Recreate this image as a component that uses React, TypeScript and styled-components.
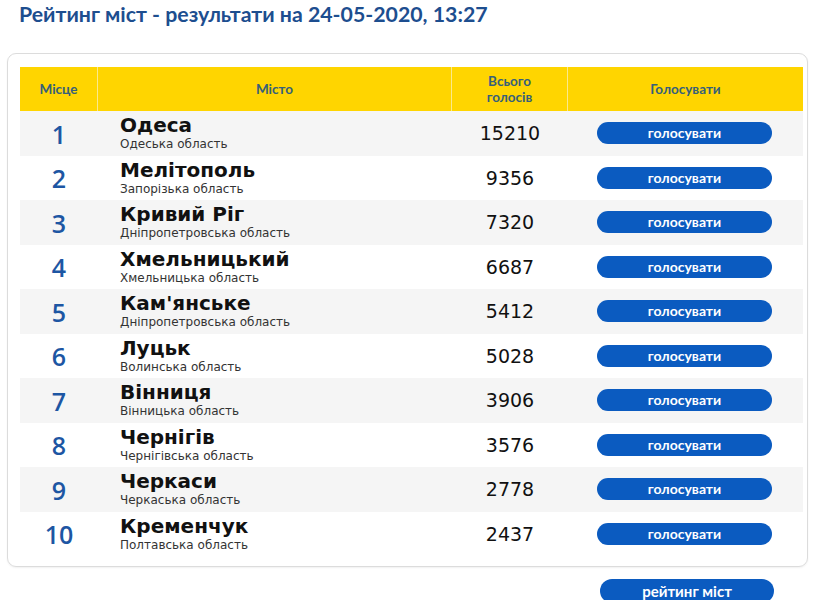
import React from "react";
import styled, { createGlobalStyle } from "styled-components";

const Global = createGlobalStyle`
  html, body { margin: 0; padding: 0; background: #ffffff; }
  body { font-family: "Noto Sans", "DejaVu Sans", sans-serif; }
`;

const Page = styled.div`
  width: 818px;
  height: 600px;
  overflow: hidden;
  box-sizing: border-box;
  padding: 0 10px 0 7px;
`;

const Title = styled.h1`
  margin: -2px 0 0 0;
  padding: 0 0 0 12px;
  height: 55px;
  box-sizing: border-box;
  font-family: "Lato", "Noto Sans", sans-serif;
  font-weight: 700;
  font-size: 21.3px;
  line-height: 32px;
  color: #1d4e8f;
`;

const Card = styled.div`
  border: 1px solid #dcdcdc;
  border-radius: 9px;
  padding: 13px 4px 10px 12px;
  box-shadow: 0 1px 2px rgba(0, 0, 0, 0.06);
`;

const Grid = styled.div`
  display: grid;
  grid-template-columns: 78px 354px 116px 235px;
`;

const HeadCell = styled.div<{ $last?: boolean }>`
  background: #ffd500;
  height: 44px;
  display: flex;
  align-items: center;
  justify-content: center;
  text-align: center;
  border-right: ${(p) => (p.$last ? "none" : "1px solid #fbe98c")};
  font-family: "Lato", "Noto Sans", sans-serif;
  font-weight: 700;
  font-size: 13.5px;
  line-height: 16px;
  color: #36607a;
`;

const Row = styled.div<{ $odd: boolean }>`
  display: contents;
  & > div {
    background: ${(p) => (p.$odd ? "#f5f5f5" : "#ffffff")};
    height: 44.5px;
  }
`;

const RankCell = styled.div`
  display: flex;
  align-items: center;
  justify-content: center;
  font-family: "Open Sans", "Noto Sans", sans-serif;
  font-weight: 600;
  font-size: 25px;
  color: #1d56a3;
  padding-top: 1px;
  box-sizing: border-box;
`;

const CityCell = styled.div`
  display: flex;
  flex-direction: column;
  justify-content: center;
  padding-left: 22px;
  box-sizing: border-box;
  font-family: "DejaVu Sans", Verdana, sans-serif;
`;

const CityName = styled.div`
  font-weight: 700;
  font-size: 20px;
  line-height: 22px;
  color: #111111;
`;

const Region = styled.div`
  font-size: 12px;
  line-height: 16px;
  color: #333333;
`;

const VotesCell = styled.div`
  display: flex;
  align-items: center;
  justify-content: center;
  font-family: "DejaVu Sans", Verdana, sans-serif;
  font-size: 19px;
  color: #111111;
`;

const ActionCell = styled.div`
  display: flex;
  align-items: center;
  justify-content: center;
  padding-right: 2px;
  box-sizing: border-box;
`;

const PillButton = styled.button`
  width: 175px;
  height: 22px;
  border: none;
  border-radius: 11px;
  background: #0b5bc0;
  color: #ffffff;
  font-family: "Lato", "Noto Sans", sans-serif;
  font-weight: 700;
  font-size: 14px;
  line-height: 22px;
  padding: 0;
  cursor: pointer;
`;

const Footer = styled.div`
  display: flex;
  justify-content: flex-end;
  padding: 12px 34px 0 0;
`;

const BigButton = styled(PillButton)`
  width: 174px;
  height: 24px;
  line-height: 22px;
  border-radius: 12px;
  font-size: 15px;
`;

const rows = [
  ["Одеса", "Одеська область", "15210"],
  ["Мелітополь", "Запорізька область", "9356"],
  ["Кривий Ріг", "Дніпропетровська область", "7320"],
  ["Хмельницький", "Хмельницька область", "6687"],
  ["Кам'янське", "Дніпропетровська область", "5412"],
  ["Луцьк", "Волинська область", "5028"],
  ["Вінниця", "Вінницька область", "3906"],
  ["Чернігів", "Чернігівська область", "3576"],
  ["Черкаси", "Черкаська область", "2778"],
  ["Кременчук", "Полтавська область", "2437"],
];

export default function App() {
  return (
    <Page>
      <Global />
      <Title>Рейтинг міст - результати на 24-05-2020, 13:27</Title>
      <Card>
        <Grid>
          <HeadCell>Місце</HeadCell>
          <HeadCell>Місто</HeadCell>
          <HeadCell>
            Всього
            <br />
            голосів
          </HeadCell>
          <HeadCell $last>Голосувати</HeadCell>
          {rows.map(([city, region, votes], i) => (
            <Row key={city} $odd={i % 2 === 0}>
              <RankCell>{i + 1}</RankCell>
              <CityCell>
                <CityName>{city}</CityName>
                <Region>{region}</Region>
              </CityCell>
              <VotesCell>{votes}</VotesCell>
              <ActionCell>
                <PillButton>голосувати</PillButton>
              </ActionCell>
            </Row>
          ))}
        </Grid>
      </Card>
      <Footer>
        <BigButton>рейтинг міст</BigButton>
      </Footer>
    </Page>
  );
}
